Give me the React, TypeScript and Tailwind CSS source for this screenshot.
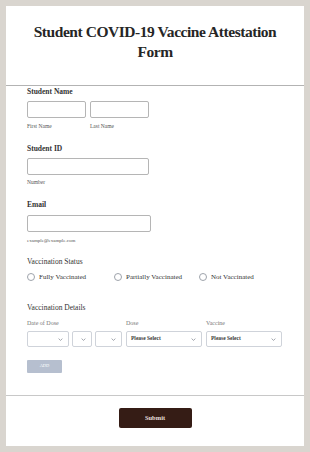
import React from 'react';

const serif = { fontFamily: '"Liberation Serif", "DejaVu Serif", serif' };

function Chevron() {
  return (
    <svg width="5" height="3" viewBox="0 0 5 3" className="shrink-0">
      <path d="M0.6 0.6 L2.5 2.4 L4.4 0.6" fill="none" stroke="#8a8f99" strokeWidth="0.8" />
    </svg>
  );
}

function SelectBox({ width, label }: { width: string; label?: string }) {
  return (
    <div
      className={`${width} h-[16px] border border-[#cfd3da] rounded-[2px] flex items-center justify-between pl-[4px] pr-[5px] bg-white`}
    >
      <span className="text-[5.5px] font-bold text-[#3a3a3a] leading-none">{label ?? ''}</span>
      <Chevron />
    </div>
  );
}

function Radio({ label, width }: { label: string; width: string }) {
  return (
    <div className={`${width} flex items-center gap-[4px]`}>
      <span className="w-[8px] h-[8px] rounded-full border border-[#9ea3ab] bg-white shrink-0" />
      <span className="text-[7px] leading-[10px] text-[#333333]">{label}</span>
    </div>
  );
}

export default function App() {
  return (
    <div className="w-[310px] h-[452px] bg-[#d9d5cf] p-[6px]" style={serif}>
      <div className="bg-white h-full flex flex-col">
        {/* Header */}
        <div className="h-[80px] border-b border-[#b3b3b3] pt-[16px] text-center">
          <h1 className="text-[15.5px] leading-[20px] font-bold tracking-[-0.45px] text-[#262626] px-[20px]">
            Student COVID-19 Vaccine Attestation Form
          </h1>
        </div>

        {/* Body */}
        <div className="flex-1 pl-[21px] pt-[1px] border-b border-[#c8c8c8] text-[#333333]">
          {/* Student Name */}
          <p className="text-[7.5px] leading-[10px] font-bold">Student Name</p>
          <div className="flex gap-[4px] mt-[4px]">
            <div>
              <div className="w-[59px] h-[17px] border border-[#b5b5b5] rounded-[2px]" />
              <p className="text-[5.5px] leading-[7px] text-[#555555] mt-[5px]">First Name</p>
            </div>
            <div>
              <div className="w-[59px] h-[17px] border border-[#b5b5b5] rounded-[2px]" />
              <p className="text-[5.5px] leading-[7px] text-[#555555] mt-[5px]">Last Name</p>
            </div>
          </div>

          {/* Student ID */}
          <p className="text-[7.5px] leading-[10px] font-bold mt-[14px]">Student ID</p>
          <div className="w-[122px] h-[17px] border border-[#b5b5b5] rounded-[2px] mt-[4px]" />
          <p className="text-[5.5px] leading-[7px] text-[#555555] mt-[4px]">Number</p>

          {/* Email */}
          <p className="text-[7.5px] leading-[10px] font-bold mt-[14px]">Email</p>
          <div className="w-[124px] h-[17px] border border-[#b5b5b5] rounded-[2px] mt-[5px]" />
          <p className="text-[5px] leading-[7px] text-[#555555] mt-[5px]">example@example.com</p>

          {/* Vaccination Status */}
          <p className="text-[7.5px] leading-[10px] mt-[13px]">Vaccination Status</p>
          <div className="flex mt-[5px]">
            <Radio label="Fully Vaccinated" width="w-[87px]" />
            <Radio label="Partially Vaccinated" width="w-[85px]" />
            <Radio label="Not Vaccinated" width="w-[80px]" />
          </div>

          {/* Vaccination Details */}
          <p className="text-[7.5px] leading-[10px] mt-[21px]">Vaccination Details</p>
          <div className="flex text-[6px] leading-[8px] text-[#777777] mt-[6px]">
            <span className="w-[99px]">Date of Dose</span>
            <span className="w-[80px]">Dose</span>
            <span>Vaccine</span>
          </div>
          <div className="flex mt-[4px]">
            <div className="flex gap-[3px] mr-[4px]">
              <SelectBox width="w-[42px]" />
              <SelectBox width="w-[20px]" />
              <SelectBox width="w-[27px]" />
            </div>
            <div className="flex gap-[4px]">
              <SelectBox width="w-[76px]" label="Please Select" />
              <SelectBox width="w-[76px]" label="Please Select" />
            </div>
          </div>
          <div className="w-[35px] h-[13px] bg-[#b6bfcf] rounded-[1px] mt-[13px] flex items-center justify-center">
            <span className="text-[4.5px] text-white leading-none">ADD</span>
          </div>
        </div>

        {/* Footer */}
        <div className="h-[50px] flex justify-center pt-[12px]">
          <div className="w-[73px] h-[20px] bg-[#351c15] rounded-[2px] flex items-center justify-center">
            <span className="text-[6.5px] font-bold text-[#e6dfdb] leading-none">Submit</span>
          </div>
        </div>
      </div>
    </div>
  );
}
